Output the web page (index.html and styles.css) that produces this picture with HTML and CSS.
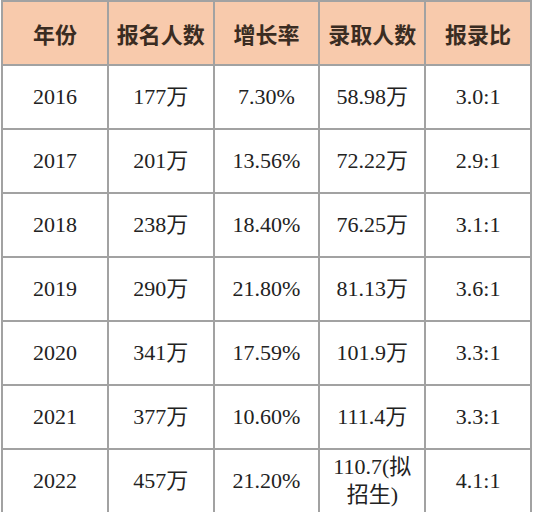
FILE: index.html
```html
<!DOCTYPE html>
<html lang="zh">
<head>
<meta charset="utf-8">
<link rel="stylesheet" href="styles.css">
</head>
<body>
<table class="stats">
  <thead>
    <tr><th>年份</th><th>报名人数</th><th>增长率</th><th>录取人数</th><th>报录比</th></tr>
  </thead>
  <tbody>
    <tr><td>2016</td><td>177万</td><td>7.30%</td><td>58.98万</td><td>3.0:1</td></tr>
    <tr><td>2017</td><td>201万</td><td>13.56%</td><td>72.22万</td><td>2.9:1</td></tr>
    <tr><td>2018</td><td>238万</td><td>18.40%</td><td>76.25万</td><td>3.1:1</td></tr>
    <tr><td>2019</td><td>290万</td><td>21.80%</td><td>81.13万</td><td>3.6:1</td></tr>
    <tr><td>2020</td><td>341万</td><td>17.59%</td><td>101.9万</td><td>3.3:1</td></tr>
    <tr><td>2021</td><td>377万</td><td>10.60%</td><td>111.4万</td><td>3.3:1</td></tr>
    <tr><td>2022</td><td>457万</td><td>21.20%</td><td>110.7(拟<br>招生)</td><td>4.1:1</td></tr>
  </tbody>
</table>
</body>
</html>
```
FILE: styles.css
```css
html, body {
  margin: 0;
  padding: 0;
  background: #ffffff;
}
.stats {
  border-collapse: collapse;
  table-layout: fixed;
  width: 531px;
  margin: 0 0 0 1px;
  font-family: "Liberation Serif", "Noto Sans CJK SC", serif;
  font-size: 22px;
  color: #222222;
}
.stats th,
.stats td {
  border: 2px solid #a2a2a2;
  text-align: center;
  vertical-align: middle;
  padding: 0;
  height: 62px;
  line-height: 28px;
}
.stats td {
  font-weight: 400;
}
.stats th {
  background: #f8caac;
  color: #3a2c22;
  font-family: "Noto Sans CJK SC", sans-serif;
  font-weight: 700;
  font-size: 22px;
}
```
